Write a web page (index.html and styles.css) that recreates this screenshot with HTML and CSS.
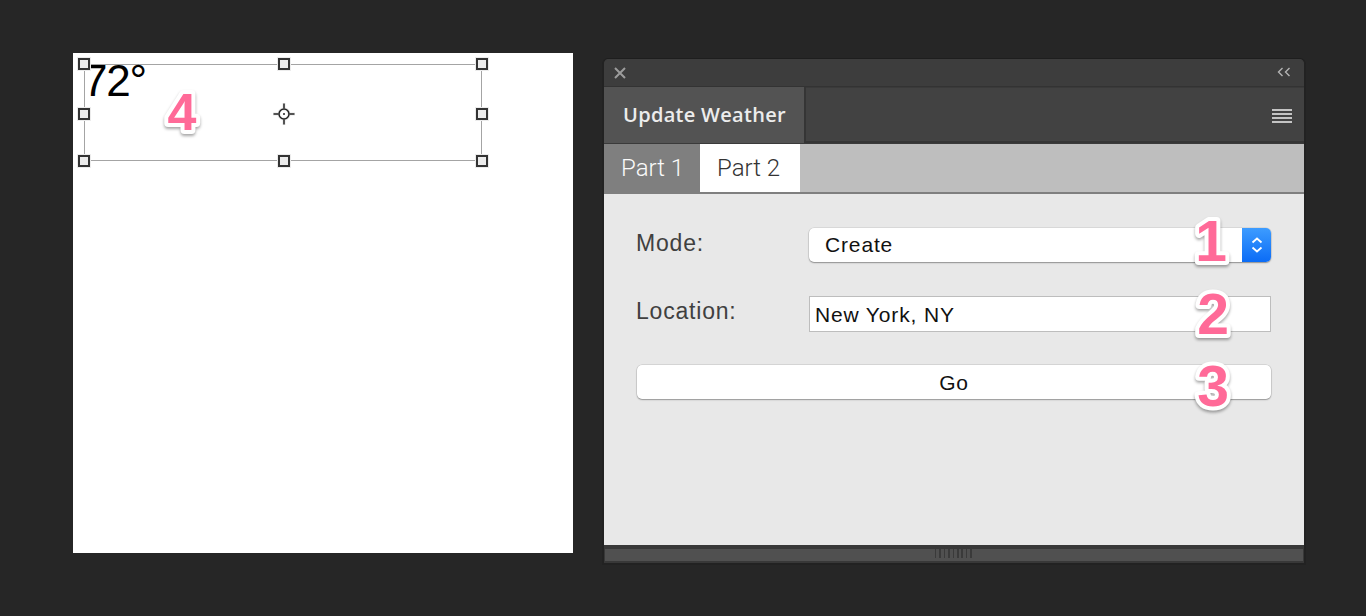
FILE: index.html
```html
<!DOCTYPE html>
<html>
<head>
<meta charset="utf-8">
<link rel="stylesheet" href="styles.css">
</head>
<body>
<div class="stage">
  <div class="canvas">
    <div class="selbox">
      <span class="temp">72°</span>
      <i class="h h-tl"></i><i class="h h-tc"></i><i class="h h-tr"></i>
      <i class="h h-ml"></i><i class="h h-mr"></i>
      <i class="h h-bl"></i><i class="h h-bc"></i><i class="h h-br"></i>
      <svg class="cross" width="24" height="24" viewBox="0 0 24 24">
        <g stroke="#eee" stroke-width="3.5" fill="none">
          <circle cx="12" cy="12" r="5"/>
          <path d="M12 1v6M12 17v6M1 12h6M17 12h6"/>
        </g>
        <g stroke="#222" stroke-width="1.5" fill="none">
          <circle cx="12" cy="12" r="5"/>
          <path d="M12 1.5v5M12 17.5v5M1.5 12h5M17.5 12h5"/>
        </g>
        <circle cx="12" cy="12" r="1" fill="#222"/>
      </svg>
    </div>
    <svg class="badge badge-4" width="60" height="64" viewBox="0 0 60 64"><text x="30" y="52">4</text></svg>
  </div>

  <div class="panel">
    <div class="titlebar">
      <svg class="close" width="14" height="14" viewBox="0 0 14 14"><path d="M2 2L12 12M12 2L2 12" stroke="#9c9c9c" stroke-width="2" fill="none"/></svg>
      <svg class="collapse" width="14" height="10" viewBox="0 0 14 10"><path d="M5.5 1L1.5 5l4 4M12.5 1L8.5 5l4 4" stroke="#b4b4b4" stroke-width="1.4" fill="none"/></svg>
    </div>
    <div class="tabrow">
      <div class="tab-main">Update Weather</div>
      <div class="tab-rest"><span class="menu"><i></i><i></i><i></i><i></i></span></div>
    </div>
    <div class="subtabs">
      <div class="subtab subtab-active">Part 1</div>
      <div class="subtab subtab-white">Part 2</div>
    </div>
    <div class="content">
      <div class="form">
        <div class="lbl">Mode:</div>
        <div class="select">
          <span class="select-text">Create</span>
          <span class="stepper">
            <svg width="14" height="18" viewBox="0 0 14 18"><path d="M2.5 6.5L7 2.5l4.5 4M2.5 11.5L7 15.5l4.5-4" stroke="#fff" stroke-width="1.8" fill="none"/></svg>
          </span>
        </div>
        <div class="lbl lbl-loc">Location:</div>
        <div class="input">New York, NY</div>
        <div class="btn">Go</div>
      </div>
      <svg class="badge badge-1" width="60" height="64" viewBox="0 0 60 64"><text x="30" y="55">1</text></svg>
      <svg class="badge badge-2" width="60" height="64" viewBox="0 0 60 64"><text x="30" y="55">2</text></svg>
      <svg class="badge badge-3" width="60" height="64" viewBox="0 0 60 64"><text x="30" y="55">3</text></svg>
    </div>
    <div class="footer"><div class="grip"><span class="grip-lines"></span></div></div>
  </div>
</div>
</body>
</html>
```

FILE: styles.css
```css
html, body {
  margin: 0;
  padding: 0;
}
body {
  background: #262626;
  width: 1366px;
  height: 616px;
  overflow: hidden;
  font-family: "Liberation Sans", Arial, sans-serif;
}
.stage {
  display: flex;
  align-items: flex-start;
  padding: 53px 0 0 73px;
}

/* ---------- canvas ---------- */
.canvas {
  position: relative;
  width: 500px;
  height: 500px;
  background: #fff;
  flex: none;
}
.selbox {
  position: absolute;
  left: 11px;
  top: 11px;
  width: 398px;
  height: 97px;
  box-sizing: border-box;
  border: 1px solid #a4a4a4;
}
.temp {
  position: absolute;
  left: -2px;
  top: -9px;
  font-family: "Liberation Sans", Arial, sans-serif;
  font-size: 44px;
  line-height: 50px;
  letter-spacing: -1.2px;
  color: #000;
}
.h {
  position: absolute;
  width: 12px;
  height: 12px;
  box-sizing: border-box;
  border: 2px solid #333;
  background: #ececec;
  box-shadow: 0 0 0 1px #ececec;
  margin: -7px 0 0 -7px;
}
.h-tl { left: 0; top: 0; }
.h-tc { left: 200px; top: 0; }
.h-tr { left: 398px; top: 0; }
.h-ml { left: 0; top: 50px; }
.h-mr { left: 398px; top: 50px; }
.h-bl { left: 0; top: 97px; }
.h-bc { left: 200px; top: 97px; }
.h-br { left: 398px; top: 97px; }
.cross {
  position: absolute;
  left: 187px;
  top: 37px;
}

/* ---------- badges ---------- */
.badge {
  position: absolute;
  overflow: visible;
  filter: drop-shadow(0 2px 1.5px rgba(0, 0, 0, 0.35));
}
.badge text {
  font-family: "Liberation Sans", Arial, sans-serif;
  font-weight: 700;
  font-size: 57px;
  fill: #ff6a98;
  stroke: #fff;
  stroke-width: 8px;
  stroke-linejoin: round;
  paint-order: stroke fill;
  text-anchor: middle;
}
.badge-4 { left: 79px; top: 25px; }
.badge-4 text { font-size: 52px; }
.badge-1 { left: 577px; top: 12px; }
.badge-2 { left: 579px; top: 85px; }
.badge-3 { left: 579px; top: 157px; }

/* ---------- panel ---------- */
.panel {
  flex: none;
  width: 704px;
  margin: 5px 0 0 29px;
  box-sizing: border-box;
  border: 2px solid #222;
  border-top: 1px solid #1e1e1e;
  border-radius: 6px 6px 0 0;
  background: #383838;
  display: flex;
  flex-direction: column;
}
.titlebar {
  height: 27px;
  background: #3d3d3d;
  border-radius: 5px 5px 0 0;
  border-bottom: 1px solid #333;
  display: flex;
  align-items: center;
  justify-content: space-between;
  padding: 0 13px 0 9px;
}
.close { margin-top: 1px; }
.collapse { margin-top: -1px; }
.tabrow {
  height: 56px;
  display: flex;
  background: #424242;
}
.tab-main {
  width: 202px;
  background: #535353;
  border-right: 2px solid #353535;
  color: #ececec;
  font-family: "Open Sans", sans-serif;
  font-weight: 600;
  font-size: 20px;
  letter-spacing: 0.3px;
  line-height: 56px;
  padding-left: 19px;
  box-sizing: border-box;
  white-space: nowrap;
}
.tab-rest {
  flex: 1;
  border-bottom: 2px solid #353535;
  border-top: 1px solid #3a3a3a;
  display: flex;
  align-items: center;
  justify-content: flex-end;
  padding-right: 12px;
}
.menu {
  display: flex;
  flex-direction: column;
  gap: 2px;
  margin-top: 2px;
}
.menu i {
  display: block;
  width: 20px;
  height: 2px;
  background: #c4c4c4;
}
.subtabs {
  height: 48px;
  display: flex;
  background: #bebebe;
  border-top: 1px solid #3a3a3a;
  border-bottom: 2px solid #7f7f7f;
}
.subtab {
  font-family: Roboto, sans-serif;
  font-weight: 300;
  font-size: 24px;
  line-height: 48px;
  box-sizing: border-box;
  padding-left: 17px;
  white-space: nowrap;
}
.subtab-active {
  width: 96px;
  background: #7f7f7f;
  color: #fafafa;
}
.subtab-white {
  width: 100px;
  background: #fff;
  color: #333;
}

/* ---------- content ---------- */
.content {
  position: relative;
  height: 351px;
  background: #e8e8e8;
  box-sizing: border-box;
  padding: 34px 33px 0 32px;
}
.form {
  display: grid;
  grid-template-columns: 173px 1fr;
  grid-template-rows: 34px 37px 34px;
  row-gap: 33px;
}
.lbl {
  align-self: start;
  font-size: 23px;
  letter-spacing: 0.8px;
  line-height: 30px;
  color: #404040;
}
.lbl-loc { margin-top: 1px; }
.select {
  display: flex;
  height: 34px;
  background: #fff;
  border-radius: 5px;
  box-shadow: 0 1px 1.5px rgba(0, 0, 0, 0.35), 0 0 0 0.5px rgba(0, 0, 0, 0.12);
}
.select-text {
  flex: 1;
  padding-left: 16px;
  font-size: 21px;
  letter-spacing: 0.85px;
  line-height: 34px;
  color: #111;
}
.stepper {
  width: 29px;
  border-radius: 0 5px 5px 0;
  background: linear-gradient(#3d9cff, #0b6cf6);
  display: flex;
  align-items: center;
  justify-content: center;
}
.input {
  align-self: end;
  height: 36px;
  box-sizing: border-box;
  background: #fff;
  border: 1px solid #bdbdbd;
  padding-left: 5px;
  font-size: 21px;
  letter-spacing: 0.85px;
  line-height: 36px;
  color: #111;
}
.btn {
  grid-column: 1 / -1;
  margin-left: 1px;
  height: 34px;
  background: #fff;
  border-radius: 5px;
  box-shadow: 0 1px 1.5px rgba(0, 0, 0, 0.3), 0 0 0 0.5px rgba(0, 0, 0, 0.15);
  text-align: center;
  font-size: 21px;
  letter-spacing: 0.85px;
  line-height: 36px;
  color: #111;
}

/* ---------- footer ---------- */
.footer {
  background: #383838;
  padding: 4px 1px 2px 1px;
}
.grip {
  height: 12px;
  background: #505050;
  display: flex;
  justify-content: center;
}
.grip-lines {
  width: 39px;
  height: 9px;
  background: repeating-linear-gradient(90deg, #3a3a3a 0 1.5px, transparent 1.5px 4.4px);
}
```
